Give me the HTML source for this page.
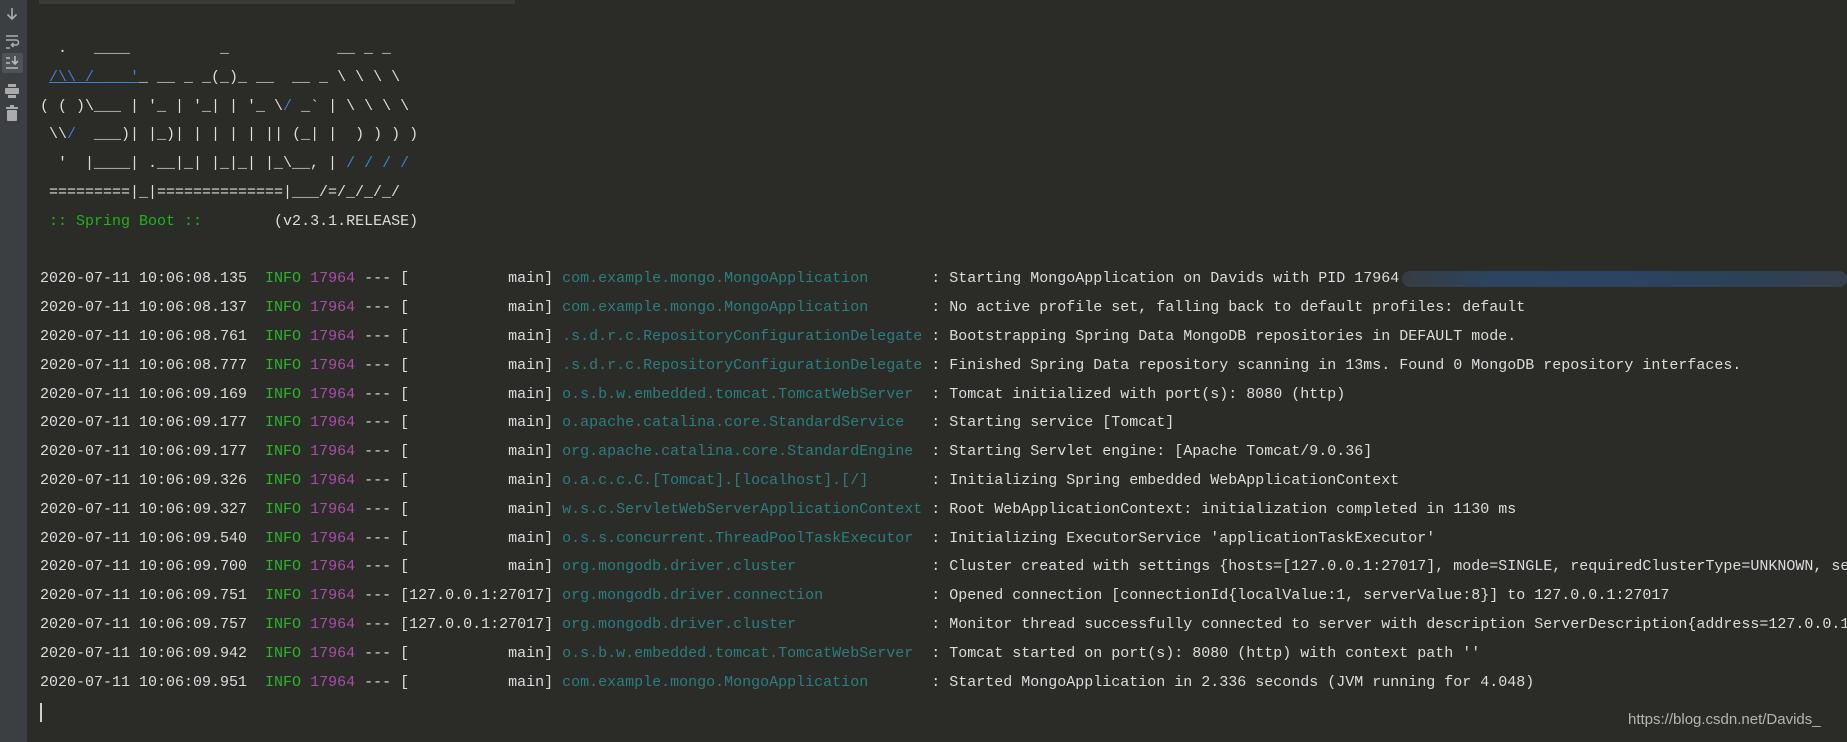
<!DOCTYPE html>
<html><head><meta charset="utf-8"><style>
html,body{margin:0;padding:0;background:#2b2b27;width:1847px;height:742px;overflow:hidden;}
#wrap{position:absolute;left:0;top:0;width:1847px;height:742px;overflow:hidden;}
#side{position:absolute;left:0;top:0;width:27px;height:742px;background:#3c3f41;}
#top{position:absolute;left:39px;top:0;width:476px;height:4px;background:#3a3a36;}
pre{position:absolute;left:40px;top:35px;margin:0;font-family:"Liberation Mono",monospace;font-size:15px;line-height:28.8px;color:#dcdcdc;white-space:pre;}
.g{color:#2ab52a}.p{color:#a84ea8}.t{color:#2a7f7f}.b{color:#3d7fd8}.u{color:#3d7fd8;text-decoration:underline}.sb{color:#1cb51c}
#blur{position:absolute;left:1402px;top:271px;width:445px;height:16px;border-radius:8px;background:linear-gradient(90deg,#3a4048,#2b4a6e 20%,#2a4a70 50%,#2d4660 80%,#3a4654);opacity:.8;}
#wm{position:absolute;left:1628px;top:711px;font-family:"Liberation Sans",sans-serif;font-size:15px;color:#b4b4b4;}
#cur{position:absolute;left:40px;top:703px;width:2px;height:19px;background:#cfcfcf;}
.hl{position:absolute;left:2px;top:53px;width:21px;height:20px;background:#4e5254;border-radius:2px;}
</style></head><body><div id="wrap">
<div id="side">
<svg width="27" height="130" style="position:absolute;left:0;top:0">
<g stroke="#a9abad" stroke-width="1.6" fill="none">
<path d="M12 8v11M7.5 14.5l4.5 4.5 4.5-4.5"/>
<path d="M6 36h12M6 40h10a2.5 2.5 0 0 1 0 5h-4M13.5 43l-2 2 2 2M6 48h4"/>
</g>
</svg>
<div class="hl"></div>
<svg width="27" height="130" style="position:absolute;left:0;top:0">
<g stroke="#b8babc" stroke-width="1.6" fill="none">
<path d="M6 58h4M6 63h4M6 68h12M15 56v8M12 61l3 3 3-3"/>
</g>
<g fill="#a9abad">
<rect x="8" y="84" width="8" height="3"/><rect x="5" y="88" width="14" height="6" rx="1"/><rect x="8" y="95" width="8" height="3"/>
<rect x="6" y="107" width="12" height="2"/><rect x="10" y="105" width="4" height="2"/><rect x="7" y="110" width="10" height="11" rx="1"/>
</g>
</svg>
</div>
<div id="top"></div>
<pre>
  .   ____          _            __ _ _
 <span class="u">/\\ / ___'</span>_ __ _ _(_)_ __  __ _ \ \ \ \
( ( )\___ | '_ | '_| | '_ \<span class="b">/</span> _` | \ \ \ \
 \\<span class="b">/</span>  ___)| |_)| | | | | || (_| |  ) ) ) )
  '  |____| .__|_| |_|_| |_\__, | <span class="b">/ / / /</span>
 =========|_|==============|___/=/_/_/_/
 <span class="sb">:: Spring Boot ::</span>        (v2.3.1.RELEASE)

2020-07-11 10:06:08.135  <span class="g">INFO</span> <span class="p">17964</span> --- [           main] <span class="t">com.example.mongo.MongoApplication      </span> : Starting MongoApplication on Davids with PID 17964
2020-07-11 10:06:08.137  <span class="g">INFO</span> <span class="p">17964</span> --- [           main] <span class="t">com.example.mongo.MongoApplication      </span> : No active profile set, falling back to default profiles: default
2020-07-11 10:06:08.761  <span class="g">INFO</span> <span class="p">17964</span> --- [           main] <span class="t">.s.d.r.c.RepositoryConfigurationDelegate</span> : Bootstrapping Spring Data MongoDB repositories in DEFAULT mode.
2020-07-11 10:06:08.777  <span class="g">INFO</span> <span class="p">17964</span> --- [           main] <span class="t">.s.d.r.c.RepositoryConfigurationDelegate</span> : Finished Spring Data repository scanning in 13ms. Found 0 MongoDB repository interfaces.
2020-07-11 10:06:09.169  <span class="g">INFO</span> <span class="p">17964</span> --- [           main] <span class="t">o.s.b.w.embedded.tomcat.TomcatWebServer </span> : Tomcat initialized with port(s): 8080 (http)
2020-07-11 10:06:09.177  <span class="g">INFO</span> <span class="p">17964</span> --- [           main] <span class="t">o.apache.catalina.core.StandardService  </span> : Starting service [Tomcat]
2020-07-11 10:06:09.177  <span class="g">INFO</span> <span class="p">17964</span> --- [           main] <span class="t">org.apache.catalina.core.StandardEngine </span> : Starting Servlet engine: [Apache Tomcat/9.0.36]
2020-07-11 10:06:09.326  <span class="g">INFO</span> <span class="p">17964</span> --- [           main] <span class="t">o.a.c.c.C.[Tomcat].[localhost].[/]      </span> : Initializing Spring embedded WebApplicationContext
2020-07-11 10:06:09.327  <span class="g">INFO</span> <span class="p">17964</span> --- [           main] <span class="t">w.s.c.ServletWebServerApplicationContext</span> : Root WebApplicationContext: initialization completed in 1130 ms
2020-07-11 10:06:09.540  <span class="g">INFO</span> <span class="p">17964</span> --- [           main] <span class="t">o.s.s.concurrent.ThreadPoolTaskExecutor </span> : Initializing ExecutorService 'applicationTaskExecutor'
2020-07-11 10:06:09.700  <span class="g">INFO</span> <span class="p">17964</span> --- [           main] <span class="t">org.mongodb.driver.cluster              </span> : Cluster created with settings {hosts=[127.0.0.1:27017], mode=SINGLE, requiredClusterType=UNKNOWN, serverSelectionTimeout='30000 ms'}
2020-07-11 10:06:09.751  <span class="g">INFO</span> <span class="p">17964</span> --- [127.0.0.1:27017] <span class="t">org.mongodb.driver.connection           </span> : Opened connection [connectionId{localValue:1, serverValue:8}] to 127.0.0.1:27017
2020-07-11 10:06:09.757  <span class="g">INFO</span> <span class="p">17964</span> --- [127.0.0.1:27017] <span class="t">org.mongodb.driver.cluster              </span> : Monitor thread successfully connected to server with description ServerDescription{address=127.0.0.1:27017, type=STANDALONE}
2020-07-11 10:06:09.942  <span class="g">INFO</span> <span class="p">17964</span> --- [           main] <span class="t">o.s.b.w.embedded.tomcat.TomcatWebServer </span> : Tomcat started on port(s): 8080 (http) with context path ''
2020-07-11 10:06:09.951  <span class="g">INFO</span> <span class="p">17964</span> --- [           main] <span class="t">com.example.mongo.MongoApplication      </span> : Started MongoApplication in 2.336 seconds (JVM running for 4.048)
</pre>
<div id="blur"></div>
<div id="cur"></div>
<div id="wm">https://blog.csdn.net/Davids_</div>
</div></body></html>
